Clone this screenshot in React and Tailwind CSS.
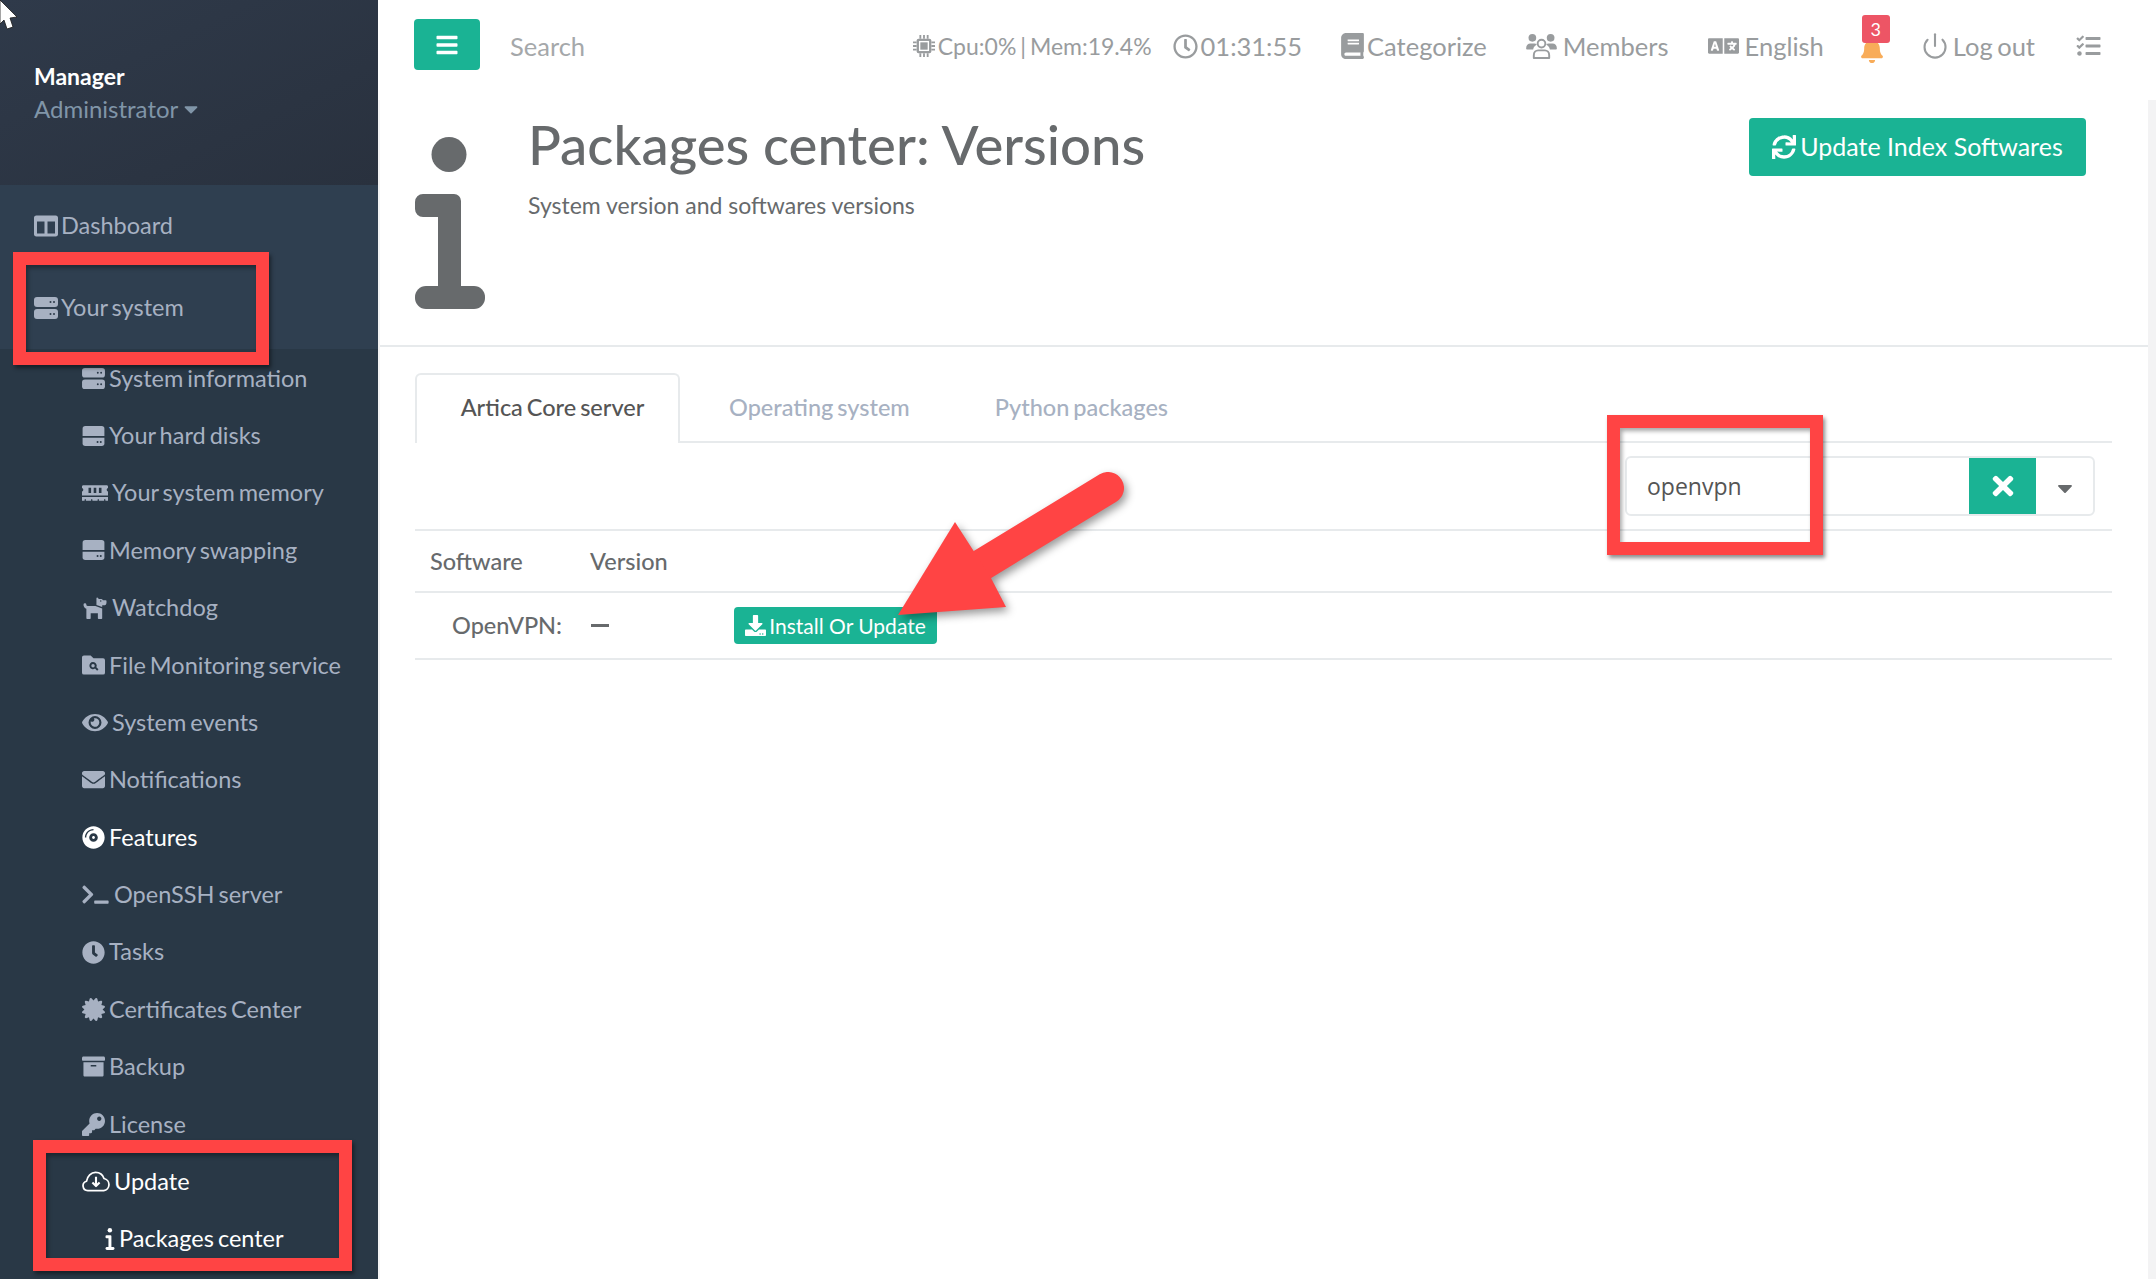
import {
  FaColumns, FaMemory, FaDog, FaEye, FaEnvelope, FaCompactDisc, FaTerminal, FaClock,
  FaCertificate, FaArchive, FaKey, FaBars, FaRegClock, FaBook, FaLanguage,
  FaBell, FaTasks, FaSync, FaDownload, FaTimes, FaCaretDown,
} from "react-icons/fa";
import { Power } from "lucide-react";

function ServerIcon({ className }) {
  return (
    <svg viewBox="0 0 24 22" className={className} fill="currentColor">
      <rect x="0" y="0" width="24" height="10" rx="3" />
      <rect x="0" y="12" width="24" height="10" rx="3" />
      <g fill="#2b3a49">
        <circle cx="16.500" cy="5" r="1" />
        <circle cx="20" cy="5" r="1" />
        <circle cx="16.500" cy="17" r="1" />
        <circle cx="20" cy="17" r="1" />
      </g>
    </svg>
  );
}

function DiskIcon({ className }) {
  return (
    <svg viewBox="0 0 24 22" className={className} fill="currentColor">
      <path d="M3 0h18a3 3 0 0 1 3 3v8H0V3a3 3 0 0 1 3-3Z" />
      <path d="M0 13h24v6a3 3 0 0 1-3 3H3a3 3 0 0 1-3-3Z" />
      <circle cx="16.500" cy="17.500" r="1.100" fill="#293846" />
      <circle cx="20" cy="17.500" r="1.100" fill="#293846" />
    </svg>
  );
}

function FolderSearch({ className }) {
  return (
    <svg viewBox="0 0 24 20" className={className} fill="currentColor">
      <path fillRule="evenodd" d="M2 0h7l3 3h10a2 2 0 0 1 2 2v13a2 2 0 0 1-2 2H2a2 2 0 0 1-2-2V2a2 2 0 0 1 2-2Zm9.500 7a3.700 3.700 0 1 0 2.100 6.700l2.200 2.200 1.400-1.400-2.200-2.200A3.700 3.700 0 0 0 11.500 7Zm0 1.900a1.800 1.800 0 1 1 0 3.600 1.800 1.800 0 0 1 0-3.600Z" />
    </svg>
  );
}

function CloudDown({ className }) {
  return (
    <svg viewBox="0 0 29 21" className={className} fill="none" stroke="currentColor" strokeWidth="1.800" strokeLinejoin="round">
      <path d="M6 20a5 5 0 0 1-1.300-9.800C5.500 5 9.500 1 14 1c4.300 0 7.700 2.700 8.800 6.400A6.400 6.400 0 0 1 22.500 20Z" />
      <path d="M14.500 5.500v9.500M10.800 11.500l3.700 3.700 3.700-3.700" strokeWidth="2.200" />
    </svg>
  );
}

function ChipIcon({ className }) {
  return (
    <svg viewBox="0 0 24 24" className={className} fill="currentColor">
      <rect x="4" y="4" width="16" height="16" rx="2" />
      <rect x="6.500" y="6.500" width="11" height="11" fill="#fff" />
      <rect x="8" y="8" width="8" height="8" />
      <path d="M7 0h2v4H7zM11 0h2v4h-2zM15 0h2v4h-2zM7 20h2v4H7zM11 20h2v4h-2zM15 20h2v4h-2zM0 7h4v2H0zM0 11h4v2H0zM0 15h4v2H0zM20 7h4v2h-4zM20 11h4v2h-4zM20 15h4v2h-4z" />
    </svg>
  );
}

function MembersIcon({ className }) {
  return (
    <svg viewBox="0 0 32 26" className={className} fill="currentColor">
      <circle cx="6.500" cy="4" r="4" />
      <circle cx="25.500" cy="4" r="4" />
      <path d="M0 15c0-3 2-5 4.500-5h4c1 0 2 .4 2.700 1-2 1.200-3.500 2.900-3.900 5H1a1 1 0 0 1-1-1ZM32 15c0-3-2-5-4.500-5h-4c-1 0-2 .4-2.700 1 2 1.200 3.500 2.900 3.900 5H31a1 1 0 0 0 1-1Z" />
      <circle cx="16" cy="10" r="4" fill="none" stroke="currentColor" strokeWidth="2" />
      <path d="M8 25v-3c0-3 2-5 4.500-5h7c2.500 0 4.500 2 4.500 5v3Z" fill="none" stroke="currentColor" strokeWidth="2" strokeLinejoin="round" />
    </svg>
  );
}

function InfoGlyph({ className }) {
  return (
    <svg viewBox="0 0 70 172" className={className} fill="currentColor">
      <ellipse cx="34" cy="17.500" rx="17.500" ry="17.500" />
      <path d="M8 57h31a7 7 0 0 1 7 7v90H23V80H8a8 8 0 0 1-8-8v-7a8 8 0 0 1 8-8Z" />
      <rect x="0" y="149" width="70" height="23" rx="11" />
    </svg>
  );
}

const subItems = [
  { label: "System information", icon: <ServerIcon className="w-[23px] h-[21px]" /> },
  { label: "Your hard disks", icon: <DiskIcon className="w-[23px] h-[20px]" /> },
  { label: "Your system memory", icon: <FaMemory className="w-[26px] h-[22px]" /> },
  { label: "Memory swapping", icon: <DiskIcon className="w-[23px] h-[20px]" /> },
  { label: "Watchdog", icon: <FaDog className="w-[26px] h-[23px]" /> },
  { label: "File Monitoring service", icon: <FolderSearch className="w-[23px] h-[20px]" /> },
  { label: "System events", icon: <FaEye className="w-[26px] h-[23px]" /> },
  { label: "Notifications", icon: <FaEnvelope className="w-[23px] h-[23px]" /> },
  { label: "Features", icon: <FaCompactDisc className="w-[23px] h-[23px]" />, white: true },
  { label: "OpenSSH server", icon: <FaTerminal className="w-[27px] h-[21px]" />, gap: "gap-[5px]" },
  { label: "Tasks", icon: <FaClock className="w-[23px] h-[23px]" /> },
  { label: "Certificates Center", icon: <FaCertificate className="w-[23px] h-[23px]" /> },
  { label: "Backup", icon: <FaArchive className="w-[23px] h-[23px]" /> },
  { label: "License", icon: <FaKey className="w-[23px] h-[23px]" /> },
  { label: "Update", icon: <CloudDown className="w-[28px] h-[21px]" />, white: true },
];

function NavItem({ icon, children, className }) {
  return (
    <div className={"flex items-center gap-[3px] " + className}>
      {icon}
      <span>{children}</span>
    </div>
  );
}

function RedBox({ className }) {
  return <div className={"absolute border-[13px] border-[#ff4444] shadow-[2px_3px_4px_rgba(0,0,0,0.45),inset_2px_3px_4px_rgba(0,0,0,0.35)] " + className} />;
}

export default function App() {
  return (
    <div className="relative flex w-full h-[1279px] overflow-hidden bg-[#f3f3f4] font-['Lato',sans-serif] text-[#676a6c]">
      <aside className="w-[378px] shrink-0 bg-[#293846] text-[23.5px] [word-spacing:-2px] text-[#a7b1c2]">
        <div className="h-[185px] pl-[34px] pt-[60px] bg-gradient-to-br from-[#2f3a4a] to-[#29313e]">
          <div className="text-white font-bold text-[23px] leading-[32px]">Manager</div>
          <div className="flex items-center text-[24px] text-[#8095a8] leading-[34px]">
            Administrator
            <FaCaretDown className="w-[22px] h-[22px] ml-[2px]" />
          </div>
        </div>
        <div className="h-[164px] bg-[#2f3f50] pl-[34px] pt-[1px]">
          <div className="h-[80px] flex items-center gap-[3px]">
            <FaColumns className="w-[24px] h-[24px]" />
            Dashboard
          </div>
          <div className="h-[83px] flex items-center gap-[3px]">
            <ServerIcon className="w-[24px] h-[22px]" />
            Your system
          </div>
        </div>
        <ul>
          {subItems.map((item) => (
            <li key={item.label} className={"h-[57.4px] pl-[82px] pt-[1px] flex items-center " + (item.gap || "gap-[4px]") + (item.white ? " text-white" : "")}>
              {item.icon}
              {item.label}
            </li>
          ))}
          <li className="h-[57.4px] pl-[105px] pt-[1px] flex items-center gap-[4px] text-white">
            <InfoGlyph className="w-[10px] h-[22px]" />
            Packages center
          </li>
        </ul>
      </aside>

      <main className="flex-1 flex flex-col min-w-0">
        <nav className="h-[100px] shrink-0 bg-white flex items-start pt-[19px] pl-[36px] text-[25.5px] text-[#999c9e]">
          <button className="w-[66px] h-[51px] rounded-[4px] bg-[#1ab394] text-white flex items-center justify-center">
            <FaBars className="w-[24px] h-[24px]" />
          </button>
          <span className="ml-[30px] mt-[11px] leading-[32px] text-[#a5a8aa]">Search</span>
          <div className="ml-auto mr-[55px] mt-[11px] h-[32px] flex items-center leading-[32px] [word-spacing:-2px]">
            <NavItem icon={<ChipIcon className="w-[22px] h-[24px]" />} className="gap-[1px] text-[23px]">Cpu:0% | Mem:19.4%</NavItem>
            <NavItem icon={<FaRegClock className="w-[25px] h-[25px]" />} className="ml-[21px]">01:31:55</NavItem>
            <NavItem icon={<FaBook className="w-[23px] h-[26px]" />} className="ml-[39px]">Categorize</NavItem>
            <NavItem icon={<MembersIcon className="w-[31px] h-[25px]" />} className="ml-[39px] gap-[6px]">Members</NavItem>
            <NavItem icon={<FaLanguage className="w-[31px] h-[28px]" />} className="ml-[39px] gap-[6px]">English</NavItem>
            <div className="relative ml-[37px] w-[22px] h-[25px] text-[#f8ac59]">
              <FaBell className="w-[22px] h-[25px] mt-[4px]" />
              <span className="absolute left-[1px] top-[-19px] w-[28px] h-[28px] rounded-[3px] bg-[#ed5565] text-white text-[18px] leading-[28px] text-center">3</span>
            </div>
            <NavItem icon={<Power className="w-[28px] h-[28px]" strokeWidth={1.800} />} className="ml-[38px] gap-[4px]">Log out</NavItem>
            <FaTasks className="ml-[41px] w-[25px] h-[24px]" />
          </div>
        </nav>

        <div className="flex-1 bg-white ml-[2px] mr-[8px]">
          <header className="h-[247px] border-b-2 border-[#e7eaec] pl-[35px] pr-[62px] flex items-start">
            <div className="mt-[37px]">
              <InfoGlyph className="w-[70px] h-[172px] text-[#676a6c]" />
            </div>
            <div className="ml-[43px] mt-[13px]">
              <h1 className="text-[54.5px] leading-[62px] font-medium">Packages center: Versions</h1>
              <p className="text-[23px] leading-[32px] mt-[14px]">System version and softwares versions</p>
            </div>
            <button className="ml-auto mt-[18px] w-[337px] h-[58px] rounded-[4px] bg-[#1ab394] text-white text-[25px] flex items-center justify-center gap-[4px]">
              <FaSync className="w-[24px] h-[24px]" />
              Update Index Softwares
            </button>
          </header>

          <section className="pl-[35px] pr-[36px] [word-spacing:-2px]">
            <div className="mt-[26px] h-[70px] flex border-b-2 border-[#e7eaec] text-[23.5px] font-medium text-[#a7b1c2]">
              <div className="w-[265px] h-[70px] bg-white border-2 border-b-0 border-[#e7eaec] rounded-t-[6px] flex items-center justify-center pl-[10px] pb-[2px] text-[#555]">Artica Core server</div>
              <div className="ml-[49px] pt-[2px] flex items-center">Operating system</div>
              <div className="ml-[85px] pt-[2px] flex items-center">Python packages</div>
            </div>
            <div className="h-[86px] flex items-center justify-end pr-[17px]">
              <div className="flex h-[60px] w-[470px] border-2 border-[#e7eaec] rounded-[6px] overflow-hidden">
                <div className="flex-1 pl-[20px] flex items-center font-['Open_Sans',sans-serif] text-[23px] text-[#555]">openvpn</div>
                <button className="w-[67px] bg-[#1ab394] text-white flex items-center justify-center">
                  <FaTimes className="w-[30px] h-[30px]" />
                </button>
                <div className="w-[57px] flex items-center justify-center pt-[4px]">
                  <FaCaretDown className="w-[24px] h-[24px] text-[#676a6c]" />
                </div>
              </div>
            </div>
            <div className="h-[64px] pt-[1px] border-y-2 border-[#e7eaec] flex items-center text-[23.5px] font-medium pl-[15px]">
              <span className="w-[160px]">Software</span>
              <span>Version</span>
            </div>
            <div className="h-[67px] border-b-2 border-[#e7eaec] flex items-center text-[23.5px] font-medium">
              <span className="ml-[37px] w-[139px]">OpenVPN:</span>
              <span className="w-[18px] h-[3px] bg-[#676a6c]" />
              <button className="ml-[125px] w-[203px] h-[37px] rounded-[4px] bg-[#1ab394] text-white text-[21px] font-normal flex items-center justify-center gap-[3px]">
                <FaDownload className="w-[21px] h-[21px]" />
                Install Or Update
              </button>
            </div>
          </section>
        </div>
      </main>

      <RedBox className="left-[13px] top-[252px] w-[256px] h-[113px]" />
      <RedBox className="left-[33px] top-[1140px] w-[319px] h-[131px]" />
      <RedBox className="left-[1607px] top-[415px] w-[216px] h-[140px]" />

      <svg className="absolute left-[880px] top-[460px] w-[250px] h-[170px] drop-shadow-[3px_4px_4px_rgba(0,0,0,0.4)]" viewBox="0 0 250 170">
        <path d="M100 106 L228 28" stroke="#ff4444" strokeWidth="32" strokeLinecap="round" fill="none" />
        <path d="M18 155 L75 62 L93 90 L111 118 L126 147 Z" fill="#ff4444" />
      </svg>

      <svg className="absolute left-0 top-0 w-[20px] h-[32px]" viewBox="0 0 20 32">
        <path d="M0 0 L17 17 L10 18 L13 27 L7 29 L4 20 L0 24 Z" fill="#fff" stroke="#1a1a1a" strokeWidth="0.800" />
      </svg>
    </div>
  );
}
